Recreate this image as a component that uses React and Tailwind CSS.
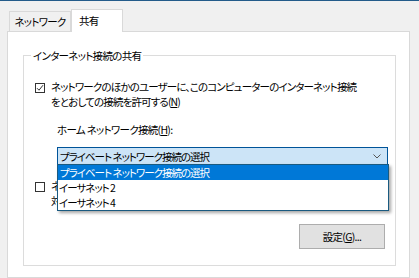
import React from "react";

const font = { fontFamily: '"Noto Sans CJK JP", "Noto Sans", sans-serif' };

function Check({ checked }) {
  return (
    <span className="w-[10px] h-[10px] shrink-0 border border-[#333333] bg-white flex items-center justify-center mt-[4px]">
      {checked && (
        <svg width="8" height="8" viewBox="0 0 8 8">
          <path d="M1 4.2 L3 6.2 L7 1.2" fill="none" stroke="#333333" strokeWidth="1" />
        </svg>
      )}
    </span>
  );
}

export default function App() {
  return (
    <div
      className="w-[419px] h-[278px] overflow-hidden bg-[#f0f0f0] border-t border-[#235b8a] flex flex-col text-[10.5px] leading-[15px] tracking-[-0.7px] text-black whitespace-nowrap [font-feature-settings:'palt']"
      style={font}
    >
      {/* tabs */}
      <div className="flex items-end pl-[9px] pt-[8px]">
        <div className="h-[20px] w-[62px] border border-b-0 border-[#d9d9d9] flex items-center justify-center">
          ネットワーク
        </div>
        <div className="relative z-10 -mb-px h-[23px] w-[52px] border border-b-0 border-[#d9d9d9] bg-white flex items-start pt-[3px] pl-[7px]">
          共有
        </div>
      </div>

      {/* panel */}
      <div className="ml-[7px] w-[403px] flex-1 border border-[#d9d9d9] bg-white pt-[23px] pl-[15px]">
        <div className="relative w-[373px] h-[211px] border border-[#dcdcdc]">
          <span className="absolute -top-[8px] left-[7px] px-[2px] bg-white">インターネット接続の共有</span>

          <div className="pt-[23px] pl-[11px] pr-[10px] flex flex-col">
            <div className="flex gap-[6px]">
              <Check checked />
              <div className="tracking-[-0.85px]">
                ネットワークのほかのユーザーに、このコンピューターのインターネット接続
                <br />
                をとおしての接続を許可する(<u>N</u>)
              </div>
            </div>

            <div className="ml-[22px] mt-[13px]">
              ホーム ネットワーク接続(<u>H</u>):
            </div>

            <div className="relative ml-[22px] mt-[10px] w-[331px] tracking-[-1px]">
              <div className="h-[18px] border border-[#005499] bg-[#cce4f7] flex items-center justify-between pl-[2px] pr-[6px]">
                <span>プライベート ネットワーク接続の選択</span>
                <svg width="8" height="5" viewBox="0 0 8 5">
                  <path d="M0.5 0.5 L4 4 L7.5 0.5" fill="none" stroke="#555555" strokeWidth="1" />
                </svg>
              </div>
              <div className="absolute z-20 left-0 top-[17px] w-[332px] border border-[#1a5a80] bg-white shadow-[2px_2px_3px_rgba(0,0,0,0.35)] flex flex-col">
                <div className="h-[15px] bg-[#0078d7] text-white pl-[2px]">プライベート ネットワーク接続の選択</div>
                <div className="h-[15px] pl-[1px]">イーサネット 2</div>
                <div className="h-[15px] pl-[1px]">イーサネット 4</div>
              </div>
            </div>

            <div className="flex gap-[6px] mt-[13px]">
              <Check />
              <div>
                ネットワークのほかのユーザーに、共有接続の制御を
                <br />
                対象として無効化することを許可する(<u>O</u>)
              </div>
            </div>

            <div className="self-end mt-[16px] w-[86px] h-[25px] border border-[#adadad] bg-[#e1e1e1] flex items-center justify-center">
              設定(<u>G</u>)...
            </div>
          </div>
        </div>
      </div>
    </div>
  );
}
